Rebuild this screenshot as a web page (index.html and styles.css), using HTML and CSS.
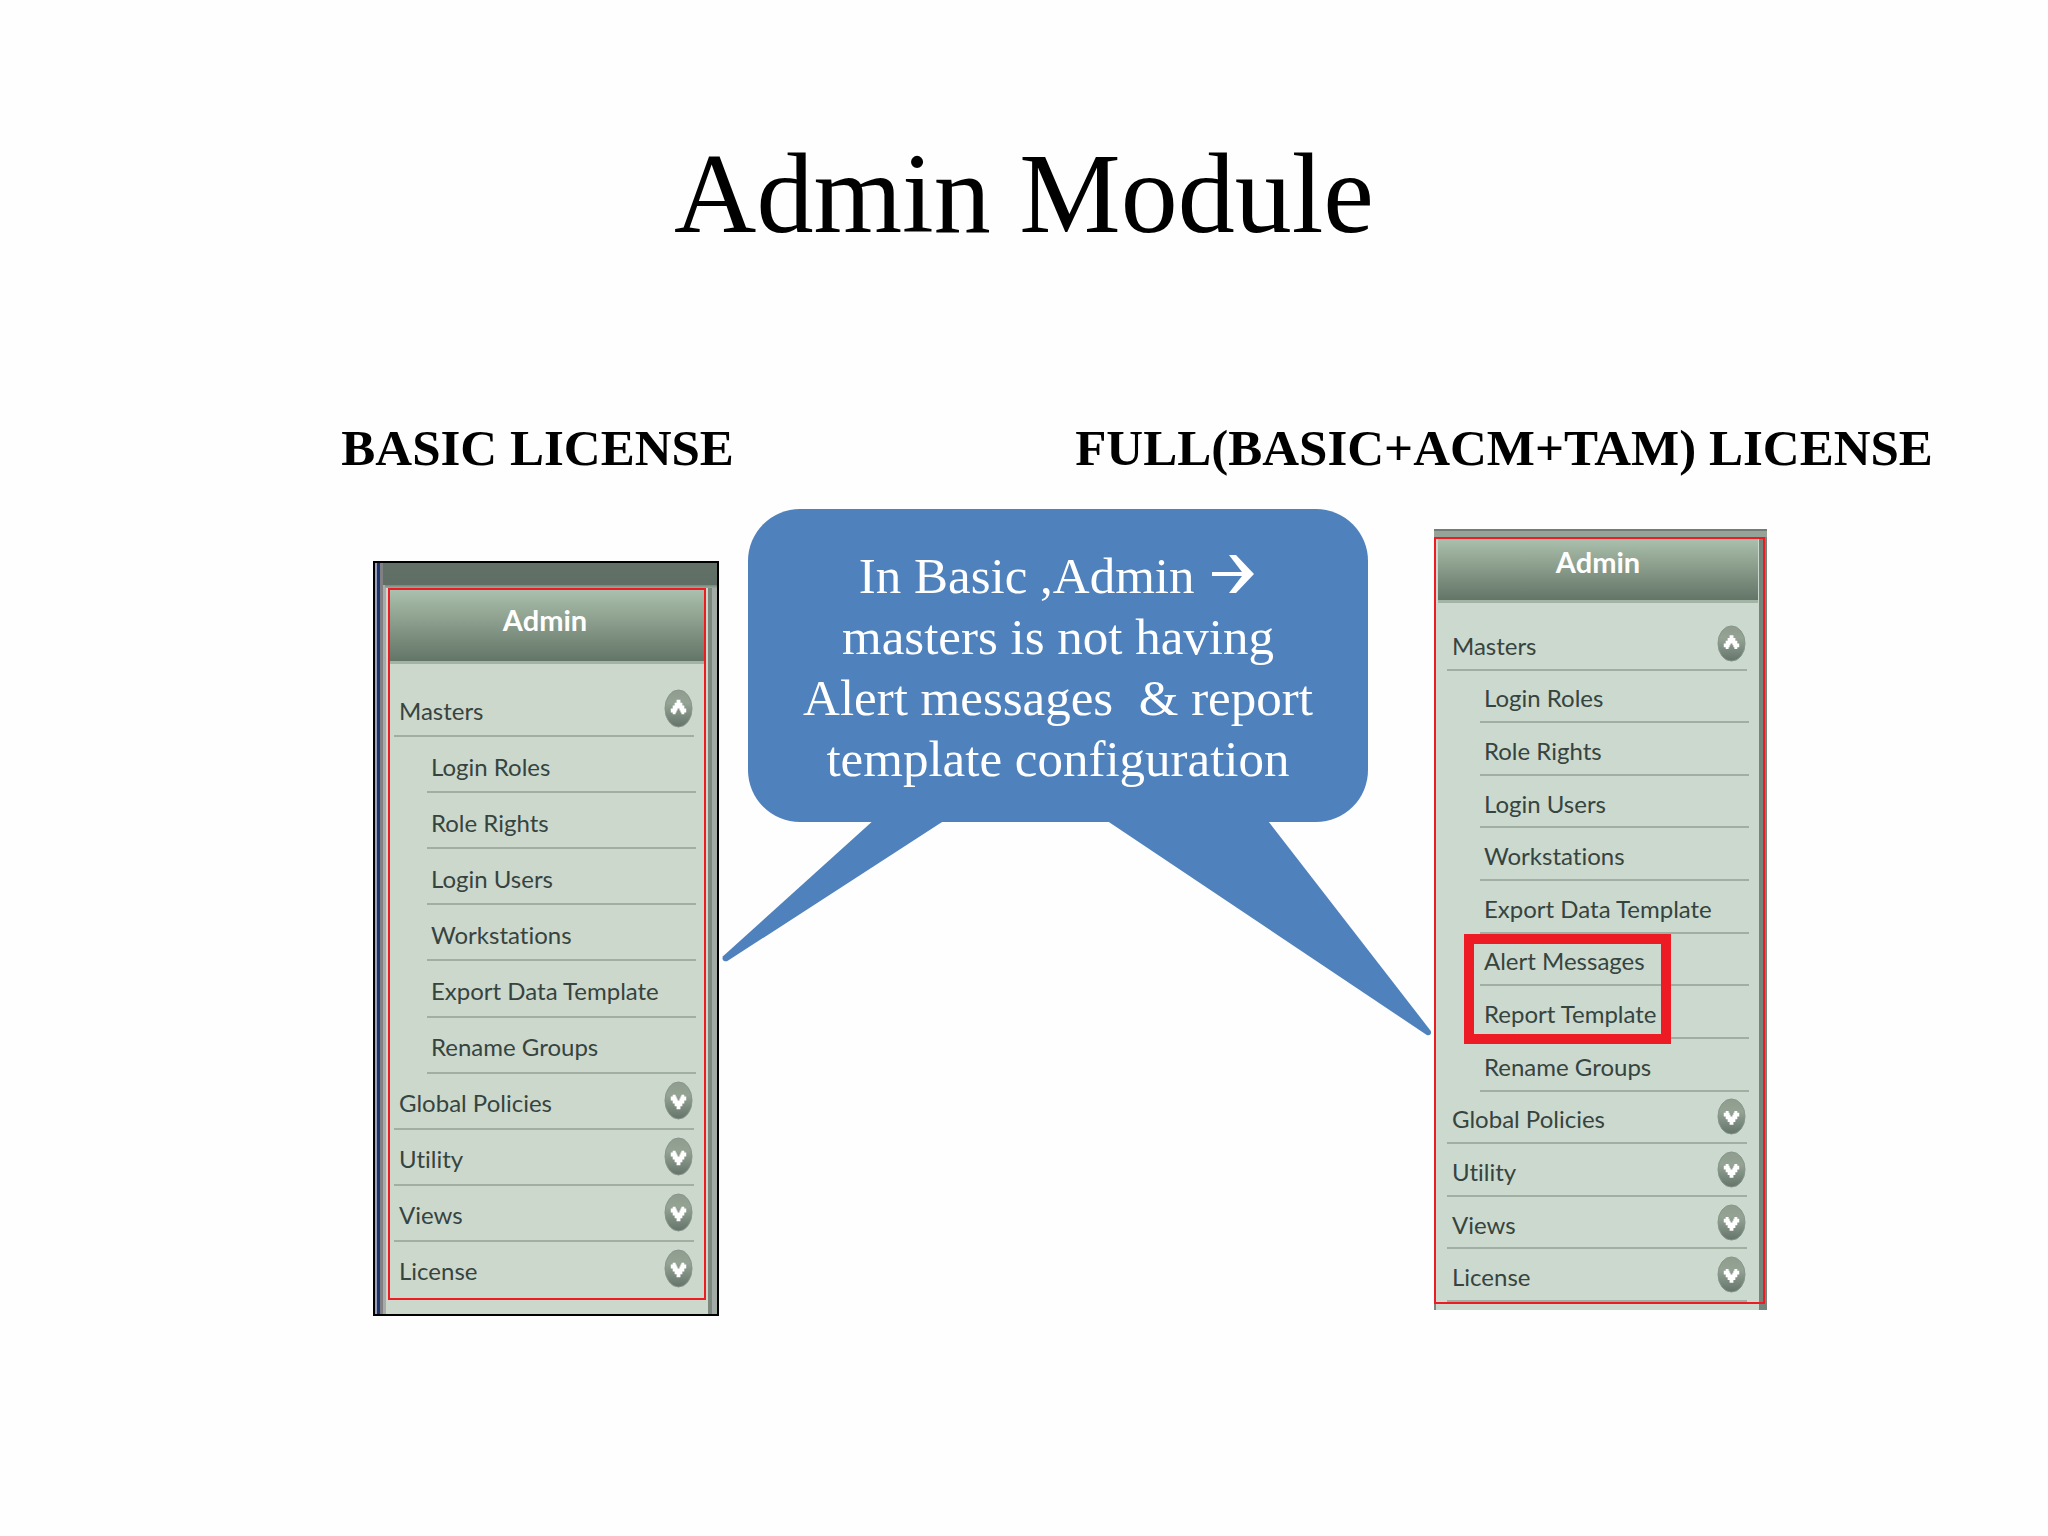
FILE: index.html
```html
<!DOCTYPE html>
<html lang="en">
<head>
<meta charset="utf-8">
<title>Admin Module</title>
<link rel="stylesheet" href="styles.css">
</head>
<body>
<svg class="defs" aria-hidden="true">
  <defs>
    <linearGradient id="knob" x1="0" y1="0" x2="0" y2="1">
      <stop offset="0" stop-color="#8f9c8f"/>
      <stop offset="0.35" stop-color="#94a394"/>
      <stop offset="1" stop-color="#64746a"/>
    </linearGradient>
    <symbol id="down" viewBox="0 0 30 40" preserveAspectRatio="none">
      <ellipse cx="15" cy="20" rx="14" ry="19" fill="url(#knob)" stroke="#87958a"/>
      <path d="M7 16h2v-2h3v2h1v2h1v2h2v-2h1v-2h1v-2h3v2h2v4h-2v3h-2v3h-2v3h-4v-3h-2v-3H9v-3H7z" fill="#fff"/>
    </symbol>
    <symbol id="up" viewBox="0 0 30 40" preserveAspectRatio="none">
      <ellipse cx="15" cy="20" rx="14" ry="19" fill="url(#knob)" stroke="#87958a"/>
      <path d="M7 24h2v2h3v-2h1v-2h1v-2h2v2h1v2h1v2h3v-2h2v-4h-2v-3h-2v-3h-2v-3h-4v3h-2v3H9v3H7z" fill="#fff"/>
    </symbol>
  </defs>
</svg>
<main class="slide">
  <h1 class="title">Admin Module</h1>
  <div class="headings">
    <h2 class="heading basic-heading">BASIC LICENSE</h2>
    <h2 class="heading full-heading">FULL(BASIC+ACM+TAM) LICENSE</h2>
  </div>
  <div class="figures">
    <section class="shot shot-basic">
      <nav class="panel" aria-label="Basic license menu">
        <h3 class="panel-title">Admin</h3>
        <ul class="menu">
          <li class="row"><button class="group" type="button">Masters<svg class="knob"><use href="#up"/></svg></button></li>
          <li class="row sub"><a href="#">Login Roles</a></li>
          <li class="row sub"><a href="#">Role Rights</a></li>
          <li class="row sub"><a href="#">Login Users</a></li>
          <li class="row sub"><a href="#">Workstations</a></li>
          <li class="row sub"><a href="#">Export Data Template</a></li>
          <li class="row sub"><a href="#">Rename Groups</a></li>
          <li class="row"><button class="group" type="button">Global Policies<svg class="knob"><use href="#down"/></svg></button></li>
          <li class="row"><button class="group" type="button">Utility<svg class="knob"><use href="#down"/></svg></button></li>
          <li class="row"><button class="group" type="button">Views<svg class="knob"><use href="#down"/></svg></button></li>
          <li class="row"><button class="group" type="button">License<svg class="knob"><use href="#down"/></svg></button></li>
        </ul>
      </nav>
    </section>
    <aside class="callout">
      <svg class="tails" viewBox="0 0 708 212" preserveAspectRatio="none" aria-hidden="true">
        <path d="M150 0L0 134Q-2 139 4 139L221 0z"/>
        <path d="M385 0L705 212Q710 213 709 208L546 0z"/>
      </svg>
      <p class="callout-text">In Basic ,Admin <svg class="arrow" viewBox="0 0 42 38" role="img" aria-label="to"><path d="M0 17H30L17 0h7L42 19 24 38h-7L30 21H0z"/></svg><br>masters is not having<br>Alert messages &nbsp;&amp; report<br>template configuration</p>
    </aside>
    <section class="shot shot-full">
      <nav class="panel" aria-label="Full license menu">
        <h3 class="panel-title">Admin</h3>
        <ul class="menu">
          <li class="row"><button class="group" type="button">Masters<svg class="knob"><use href="#up"/></svg></button></li>
          <li class="row sub"><a href="#">Login Roles</a></li>
          <li class="row sub"><a href="#">Role Rights</a></li>
          <li class="row sub"><a href="#">Login Users</a></li>
          <li class="row sub"><a href="#">Workstations</a></li>
          <li class="row sub"><a href="#">Export Data Template</a></li>
          <li class="row sub marked"><a href="#">Alert Messages</a></li>
          <li class="row sub"><a href="#">Report Template</a></li>
          <li class="row sub"><a href="#">Rename Groups</a></li>
          <li class="row"><button class="group" type="button">Global Policies<svg class="knob"><use href="#down"/></svg></button></li>
          <li class="row"><button class="group" type="button">Utility<svg class="knob"><use href="#down"/></svg></button></li>
          <li class="row"><button class="group" type="button">Views<svg class="knob"><use href="#down"/></svg></button></li>
          <li class="row"><button class="group" type="button">License<svg class="knob"><use href="#down"/></svg></button></li>
        </ul>
      </nav>
    </section>
  </div>
</main>
</body>
</html>
```
FILE: styles.css
```css
*,
*::after { box-sizing: border-box; }

body {
  margin: 0;
  background: #fefefe;
  color: #000;
  font-family: "Liberation Serif", "Times New Roman", serif;
}

.defs { position: absolute; width: 0; height: 0; }

.slide { padding: 128px 0 120px; }

.title {
  margin: 0;
  font-size: 114px;
  line-height: 132px;
  font-weight: 400;
  text-align: center;
}

.headings {
  display: grid;
  grid-template-columns: 341fr auto 341fr auto 115fr;
  margin-top: 158px;
}

.heading {
  margin: 0;
  font-size: 51px;
  line-height: 60px;
  white-space: nowrap;
}

.basic-heading { grid-column: 2; }
.full-heading { grid-column: 4; }

.figures {
  display: grid;
  grid-template-columns: 373fr 346fr 29fr 620fr 66fr 333fr 281fr;
  align-items: start;
  margin-top: 31px;
}

/* Callout */
.callout {
  grid-column: 4;
  position: relative;
  padding: 37px 0 32px;
  border-radius: 52px;
  background: #4f81bd;
  color: #fff;
}

.callout-text {
  margin: 0;
  font-size: 51px;
  line-height: 61px;
  text-align: center;
  white-space: nowrap;
}

.arrow {
  width: 42px;
  height: 38px;
  margin: 0 3px 0 5px;
  fill: #fff;
}

.tails {
  position: absolute;
  top: calc(100% - 1px);
  left: -4%;
  width: 114%;
  height: 214px;
  fill: #4f81bd;
  overflow: visible;
}

/* Menu captures */
.shot-basic {
  grid-column: 2;
  margin-top: 52px;
  padding: 25px 11px 14px 13px;
  border: 2px solid #000;
  background:
    linear-gradient(#627067, #5f6f66) 8px 0 / 100% 22px no-repeat,
    linear-gradient(#708a7c, #9aa89d) 10px 22px / 100% 3px no-repeat,
    linear-gradient(90deg, #9aa0c0 0 2px, #1c3468 2px 5px, #808084 5px 8px, #a9aaa9 8px 11px, #cdd8cd 11px calc(100% - 9px), #7c877e calc(100% - 9px) calc(100% - 5px), #a2aaa3 calc(100% - 5px));
}

.shot-full {
  grid-column: 6;
  margin-top: 20px;
  padding: 8px 2px 6px 0;
  background:
    linear-gradient(#717d75 0 2px, #95a398 2px) top / 100% 8px no-repeat,
    linear-gradient(90deg, #7a887e 0 2px, #ccd9ce 2px calc(100% - 8px), #76857b calc(100% - 8px));
}

.panel {
  display: flex;
  flex-direction: column;
  border: 2px solid #ed1c24;
  color: #36443f;
  font-family: Lato, "Open Sans", sans-serif;
  font-size: 24px;
  font-variant-ligatures: none;
}

.shot-basic .panel { min-height: 712px; }
.shot-full .panel { min-height: 767px; }

.panel-title {
  margin: 0 0 17px;
  border-bottom: 3px solid #a3b3a4;
  background: linear-gradient(#abc0ae, #8fa18f 40%, #627567);
  color: #fff;
  font-size: 29px;
  line-height: 60px;
  height: 74px;
  text-align: center;
}

.shot-basic .panel-title { padding-right: 4px; }

.shot-full .panel-title {
  height: 64px;
  line-height: 46px;
  margin: 0 5px 15px 2px;
}

.menu {
  flex: 1;
  display: grid;
  grid-auto-rows: 1fr;
  margin: 0;
  padding: 0 8px 0 4px;
  list-style: none;
}

.shot-full .menu { padding: 0 14px 0 11px; }

.row {
  position: relative;
  display: flex;
  margin-right: 2px;
  border-bottom: 2px solid #a0afa2;
}

.shot-basic .row:last-child { border-bottom-color: transparent; }

.row.sub { margin: 0 0 0 33px; }

.row a {
  display: flex;
  align-items: center;
  padding: 4px 0 0 4px;
  color: inherit;
  text-decoration: none;
  white-space: nowrap;
}

.group {
  flex: 1;
  display: flex;
  align-items: center;
  justify-content: space-between;
  padding: 4px 1px 0 5px;
  border: 0;
  background: none;
  color: inherit;
  font: inherit;
  font-variant-ligatures: none;
}

.knob {
  width: 29px;
  height: 39px;
  margin-bottom: 4px;
}

.shot-full .knob { height: 37px; }

.marked::after {
  content: "";
  position: absolute;
  z-index: 1;
  top: 0;
  left: -16px;
  width: 207px;
  height: calc(200% + 9px);
  border: 10px solid #ed1c24;
}
```
